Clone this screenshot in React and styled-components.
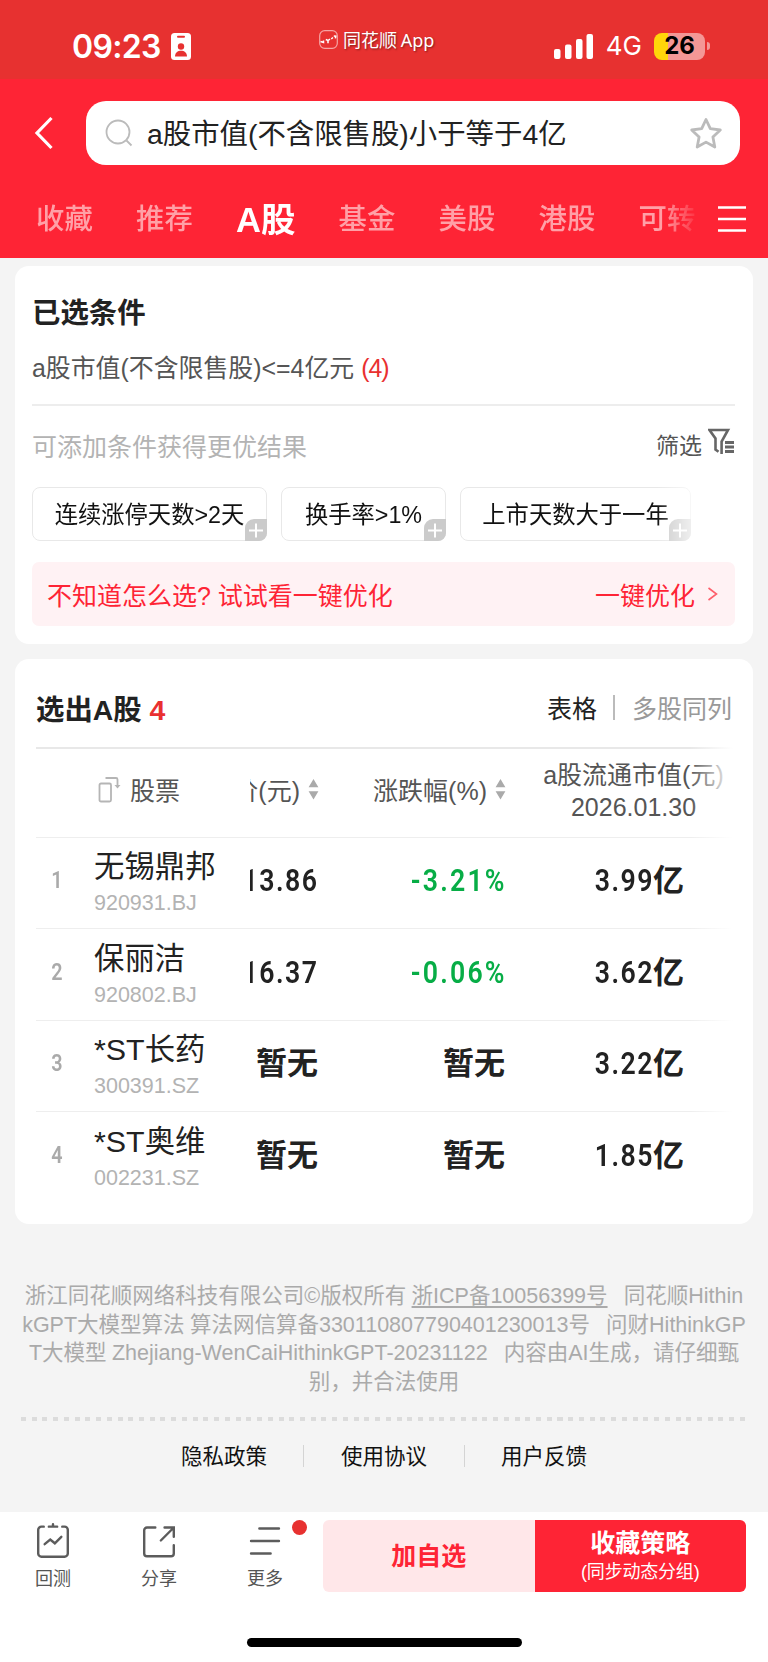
import React from 'react';
import styled, { createGlobalStyle, css } from 'styled-components';

const GlobalStyle = createGlobalStyle`
  * {
    box-sizing: border-box;
  }

  body {
    margin: 0;
    background: #f4f4f4;
    font-family: 'Liberation Sans', 'Noto Sans CJK SC', sans-serif;
    color: #222;
  }
`;

const row = css`
  display: flex;
  align-items: center;
`;

const Page = styled('div')`
  display: flex;
  flex-direction: column;
  width: 768px;
  height: 1662px;
  overflow: hidden;
  background: #f4f4f4;
  white-space: nowrap;
`;

const StatusBar = styled('header')`
  ${row};

  height: 79px;
  padding: 0 58px 0 72px;
  background: #e73130;
  color: #fff;
  font-family: Inter, sans-serif;
`;

const Clock = styled('div')`
  ${row};

  gap: 10px;
  width: 247px;
  padding-top: 14px;
  font-size: 32px;
  line-height: 36px;
  font-weight: 600;
  letter-spacing: -0.7px;
`;

const AppBadge = styled('div')`
  ${row};

  gap: 5px;
  flex: 1;
  font-family: 'Noto Sans', 'Noto Sans CJK SC', sans-serif;
  font-size: 18px;
  line-height: 22px;
  word-spacing: -1px;
  text-shadow: 1px 1px 2px rgba(0, 0, 0, 0.45);
`;

const Signals = styled('div')`
  ${row};

  padding-top: 13px;
  font-size: 26px;
  line-height: 30px;

  svg {
    margin-right: 12px;
  }
`;

const Battery = styled('div')`
  ${row};

  justify-content: center;
  width: 51px;
  height: 27px;
  margin-left: 12px;
  border-radius: 8px;
  background: linear-gradient(90deg, #ffd60a 13.5px, #f49796 13.5px);
  color: #000;
  font-size: 24px;
  font-weight: 700;
`;

const BatteryCap = styled('div')`
  width: 3px;
  height: 8px;
  margin-left: 2px;
  border-radius: 0 3px 3px 0;
  background: #f49796;
`;

const TopArea = styled('div')`
  height: 179px;
  background: #fe2435;
`;

const SearchRow = styled('div')`
  ${row};

  gap: 33px;
  padding: 22px 28px 0 34px;
`;

const SearchBox = styled('div')`
  ${row};

  flex: 1;
  height: 64px;
  padding: 0 17px 0 19px;
  border-radius: 20px;
  background: #fff;
  font-size: 28.4px;

  span {
    flex: 1;
    padding: 0 0 3px 14px;
  }
`;

const TabRow = styled('nav')`
  ${row};

  height: 93px;
  padding: 14px 22px 0 36px;
`;

const Tabs = styled('div')`
  ${row};

  flex: 1;
  gap: 43.2px;
  height: 50px;
  margin-top: -4px;
  overflow: hidden;
  mask-image: linear-gradient(90deg, #000 625px, transparent 665px);
`;

const Tab = styled('div')`
  flex: none;
  color: ${({ $active }) => ($active ? '#fff' : '#ffa0a7')};
  font-size: ${({ $active }) => ($active ? '34.5px' : '28.4px')};
  font-weight: ${({ $active }) => ($active ? 700 : 500)};
`;

const Card = styled('section')`
  width: 738px;
  height: ${({ $height }) => $height}px;
  margin: ${({ $top }) => $top}px 15px 0;
  border-radius: 14px;
  background: #fff;
`;

const CardTitle = styled('h2')`
  margin: 0;
  font-size: 28.4px;
  line-height: 40px;
  font-weight: 700;

  em {
    color: #e93030;
    font-style: normal;
  }
`;

const Conditions = styled(Card)`
  padding: 27px 18px 0 17px;
`;

const Condition = styled('div')`
  height: 55px;
  margin-top: 18px;
  border-bottom: 2px solid #ededed;
  color: #555;
  font-size: 24.9px;
  line-height: 34px;

  em {
    color: #e93030;
    font-style: normal;
    letter-spacing: -1px;
  }
`;

const HintRow = styled('div')`
  ${row};

  justify-content: space-between;
  height: 81px;
  padding-bottom: 3px;
  color: #b3b3b3;
  font-size: 25px;
`;

const Filter = styled('div')`
  ${row};

  gap: 6px;
  margin-top: -3px;
  color: #555;
  font-size: 23px;

  svg {
    margin-top: -5px;
  }
`;

const Chips = styled('div')`
  display: flex;
  gap: 14px;
  overflow: hidden;
  mask-image: linear-gradient(90deg, #000 625px, transparent 675px);
`;

const Chip = styled('div')`
  position: relative;
  flex: none;
  width: ${({ $width }) => $width}px;
  height: 54px;
  border: 1px solid #e8e8e8;
  border-radius: 8px;
  color: #111;
  font-size: 23.3px;
  line-height: 54px;
  text-align: center;
`;

const ChipPlus = styled('svg')`
  position: absolute;
  right: -1px;
  bottom: -1px;
`;

const Banner = styled('div')`
  ${row};

  justify-content: space-between;
  height: 64px;
  margin-top: 21px;
  padding: 0 17px 1px 15px;
  border-radius: 7px;
  background: #fff2f4;
  color: #fe2435;
  font-size: 25px;

  div {
    ${row};

    gap: 12px;
  }
`;

const Results = styled(Card)`
  position: relative;
  padding: 0 18px 0 21px;

  &::after {
    content: '';
    position: absolute;
    top: 80px;
    right: 18px;
    width: 45px;
    height: 470px;
    background: linear-gradient(90deg, rgba(255, 255, 255, 0), #fff 95%);
  }
`;

const ResultsHead = styled('div')`
  ${row};

  justify-content: space-between;
  height: 88px;
  padding-top: 13px;
`;

const Views = styled('div')`
  ${row};

  margin-top: -5px;
  padding-right: 3px;
  color: #999;
  font-size: 25px;

  b {
    color: #222;
    font-weight: 400;
  }

  i {
    width: 2px;
    height: 25px;
    margin: 0 17px 0 16px;
    background: #bbb;
  }
`;

const TableRow = styled('div')`
  display: grid;
  grid-template-columns: 42px 172px 68px 187px 230px;
  align-items: center;
  height: ${({ $head }) => ($head ? '89.5px' : '91.5px')};
  padding-bottom: ${({ $head }) => ($head ? '4px' : '3px')};
  border-top: ${({ $head }) => ($head ? '2px solid #e8e8e8' : '1.5px solid #eee')};
  color: ${({ $head }) => ($head ? '#555' : '#222')};
  font-size: 25px;
`;

const HeadStock = styled('div')`
  ${row};

  gap: 8px;
  margin-top: -3px;
  padding-left: 20px;
`;

const HeadCell = styled('div')`
  ${row};

  justify-content: flex-end;
  gap: 8px;
  overflow: hidden;
  margin: -3px -1px 0 0;
`;

const HeadCap = styled('div')`
  padding-left: 27px;
  text-align: center;
  line-height: 32px;
`;

const Rank = styled('div')`
  color: #aaa;
  font: 600 23px/30px Roboto, sans-serif;
  text-align: center;
  transform: scaleX(0.86);
`;

const Stock = styled('div')`
  padding-left: 16px;
`;

const StockName = styled('div')`
  font-size: 30.4px;
  line-height: 44px;
`;

const StockCode = styled('div')`
  color: #b3b3b3;
  font-size: 21.5px;
  line-height: 30px;
`;

const Value = styled('div')`
  display: flex;
  justify-content: flex-end;
  overflow: hidden;
  color: ${({ $down }) => ($down ? '#07ad46' : '#222')};
  font-family: Roboto, 'Noto Sans CJK SC', sans-serif;
  font-size: 31px;
  line-height: 44px;
  font-weight: 600;
`;

const CapValue = styled(Value)`
  justify-content: center;
  padding-left: 29px;
`;

// narrow figures, anchored to whatever follows on the right
const Figure = styled('span')`
  flex: none;
  letter-spacing: ${({ $wide }) => ($wide ? 2.6 : 1.8)}px;
  margin-right: ${({ $wide }) => ($wide ? -2 : -1)}px;
  transform: scaleX(0.86);
  transform-origin: 100% 50%;
`;

const Legal = styled('div')`
  margin-top: 58px;
  color: #aaa;
  font-size: 21.5px;
  line-height: 28.7px;
  text-align: center;
  white-space: pre;
  word-spacing: -0.6px;

  u {
    text-underline-offset: 3px;
    text-decoration-thickness: 1.5px;
  }
`;

const DottedRule = styled('div')`
  flex: none;
  height: 4px;
  margin: 20px 21px 0;
  background: repeating-linear-gradient(90deg, #dcdcdc 0 5px, transparent 5px 10.73px);
`;

const Links = styled('div')`
  ${row};

  justify-content: center;
  height: 91px;
  padding-bottom: 23px;
  color: #111;
  font-size: 21.5px;

  i {
    width: 1px;
    height: 22px;
    margin: 3px 36.5px 0;
    background: #d4d4d4;
  }
`;

const BottomBar = styled('footer')`
  flex: 1;
  background: #fff;
`;

const Actions = styled('div')`
  display: flex;
  height: 80px;
  padding-top: 8px;
`;

const Tool = styled('div')`
  position: relative;
  display: flex;
  flex-direction: column;
  align-items: center;
  width: 106px;
  color: #555;
  font-size: 18px;
  line-height: 26px;

  svg {
    margin: 2px 0 7px;
  }
`;

const Dot = styled('span')`
  position: absolute;
  top: 0;
  left: 80px;
  width: 15px;
  height: 15px;
  border-radius: 50%;
  background: #e73130;
`;

const Buttons = styled('div')`
  display: flex;
  margin-left: 5px;
`;

const ActionButton = styled('div')`
  display: flex;
  flex-direction: column;
  align-items: center;
  justify-content: center;
  width: 211.5px;
  border-radius: ${({ $primary }) => ($primary ? '0 6px 6px 0' : '6px 0 0 6px')};
  background: ${({ $primary }) => ($primary ? '#fe2435' : '#ffe7e9')};
  color: ${({ $primary }) => ($primary ? '#fff' : '#fe2435')};
  font-size: 25px;
  line-height: 32px;
  font-weight: 700;

  small {
    font-size: 18px;
    line-height: 26px;
    font-weight: 400;
    letter-spacing: -0.2px;
  }
`;

const HomeIndicator = styled('div')`
  width: 275px;
  height: 9px;
  margin: 46px auto 0 247px;
  border-radius: 5px;
  background: #000;
`;

const tabs = ['收藏', '推荐', 'A股', '基金', '美股', '港股', '可转'];

const chips = [
  { text: '连续涨停天数>2天', width: 235 },
  { text: '换手率>1%', width: 165 },
  { text: '上市天数大于一年', width: 231 },
];

const stocks = [
  { name: '无锡鼎邦', code: '920931.BJ', price: '13.86', change: '-3.21%', cap: '3.99' },
  { name: '保丽洁', code: '920802.BJ', price: '16.37', change: '-0.06%', cap: '3.62' },
  { name: '*ST长药', code: '300391.SZ', cap: '3.22' },
  { name: '*ST奥维', code: '002231.SZ', cap: '1.85' },
];

const SortSvg = styled('svg')`
  flex: none;
`;

const SortIcon = () => (
  <SortSvg width="11" height="22" viewBox="0 0 11 22" fill="#aaa">
    <path d="M5.5 1l4.9 8.200H.6zM5.5 21.500l4.900-8.200H.6z" />
  </SortSvg>
);

const BadgeIcon = () => (
  <svg width="20" height="27" viewBox="0 0 20 27">
    <rect width="20" height="27" rx="3.5" fill="#fff" />
    <rect x="6" y="2.8" width="8" height="2" rx="1" fill="#e73130" />
    <circle cx="10" cy="13.5" r="3.2" fill="#e73130" />
    <path d="M4 23.5c0-4 2.7-5.8 6-5.8s6 1.8 6 5.8z" fill="#e73130" />
  </svg>
);

const AppIcon = () => (
  <svg width="19" height="19" viewBox="0 0 19 19" fill="none">
    <rect x=".7" y=".7" width="17.6" height="17.6" rx="5" stroke="#f6a5a4" strokeWidth="1.2" />
    <path d="M1.5 11.5l3 1v-2M6.8 9.5l2.2 1 2-1.4M9 10.5v2.8M12.3 9l1.6-1.5M14.8 6l2 .2-.4 2.2" stroke="#fff" strokeWidth="1.5" />
  </svg>
);

const SignalIcon = () => (
  <svg width="40" height="25" viewBox="0 0 40 25" fill="#fff">
    <rect x="0" y="15" width="6.5" height="10" rx="2" />
    <rect x="11" y="10.5" width="6.5" height="14.5" rx="2" />
    <rect x="22" y="5" width="6.5" height="20" rx="2" />
    <rect x="32.5" y="0" width="6.5" height="25" rx="2" />
  </svg>
);

const FilterIcon = () => (
  <svg width="27" height="27" viewBox="0 0 27 27" fill="none" stroke="#666" strokeWidth="2.6">
    <path d="M13.600 26V13.500L20 2H1.500l6 8.500v11l3 2.200" />
    <path d="M17 14.500h9M17 19h9M17 23.500h9" strokeWidth="2.800" />
  </svg>
);

const App = () => (
  <>
    <GlobalStyle />
    <Page>
      <StatusBar>
        <Clock>
          09:23
          <BadgeIcon />
        </Clock>
        <AppBadge>
          <AppIcon />
          同花顺 App
        </AppBadge>
        <Signals>
          <SignalIcon />
          4G
          <Battery>26</Battery>
          <BatteryCap />
        </Signals>
      </StatusBar>

      <TopArea>
        <SearchRow>
          <svg width="19" height="34" viewBox="0 0 19 34" fill="none" stroke="#fff" strokeWidth="3.2">
            <path d="M17.5 2L3 17l14.5 15" />
          </svg>
          <SearchBox>
            <svg width="28" height="28" viewBox="0 0 28 28" fill="none" stroke="#bbb" strokeWidth="1.8">
              <circle cx="13" cy="13" r="11.5" />
              <path d="M21.5 21.5l5 5" />
            </svg>
            <span>a股市值(不含限售股)小于等于4亿</span>
            <svg width="34" height="32" viewBox="0 0 34 32" fill="none" stroke="#bbb" strokeWidth="2.8" strokeLinejoin="round">
              <path d="M17 2.5l4.300 9.200 10 1.300-7.400 7 1.900 10L17 25.100 8.200 30l1.900-10-7.400-7 10-1.300z" />
            </svg>
          </SearchBox>
        </SearchRow>
        <TabRow>
          <Tabs>
            {tabs.map((tab) => (
              <Tab key={tab} $active={tab === 'A股'}>
                {tab}
              </Tab>
            ))}
          </Tabs>
          <svg width="28" height="28" viewBox="0 0 28 28" stroke="#fff" strokeWidth="2.6">
            <path d="M0 2.5h28M0 14h28M0 25.5h28" />
          </svg>
        </TabRow>
      </TopArea>

      <Conditions $height={378} $top={8}>
        <CardTitle>已选条件</CardTitle>
        <Condition>
          a股市值(不含限售股)&lt;=4亿元 <em>(4)</em>
        </Condition>
        <HintRow>
          可添加条件获得更优结果
          <Filter>
            筛选
            <FilterIcon />
          </Filter>
        </HintRow>
        <Chips>
          {chips.map(({ text, width }) => (
            <Chip key={text} $width={width}>
              {text}
              <ChipPlus width="22" height="22" viewBox="0 0 22 22">
                <path d="M9 0h13v14a8 8 0 0 1-8 8H0V9a9 9 0 0 1 9-9z" fill="#cbcbcb" />
                <path d="M11 4.5v14M4 11.5h14" stroke="#fff" strokeWidth="2" />
              </ChipPlus>
            </Chip>
          ))}
        </Chips>
        <Banner>
          不知道怎么选? 试试看一键优化
          <div>
            一键优化
            <svg width="11" height="14" viewBox="0 0 11 14" fill="none" stroke="#fe5f6b" strokeWidth="1.6">
              <path d="M1.5 1l8 6-8 6" />
            </svg>
          </div>
        </Banner>
      </Conditions>

      <Results $height={565} $top={15}>
        <ResultsHead>
          <CardTitle>
            选出A股 <em>4</em>
          </CardTitle>
          <Views>
            <b>表格</b>
            <i />
            多股同列
          </Views>
        </ResultsHead>
        <TableRow $head>
          <span />
          <HeadStock>
            <svg width="24" height="27" viewBox="0 0 24 27" fill="none" stroke="#b5b5b5" strokeWidth="1.8">
              <rect x="1.5" y="7.5" width="11.5" height="18" rx="1.5" />
              <path d="M7.500 2h10.500q1.500 0 1.500 1.500V10" />
              <path d="M16.500 9h6l-3 3.500z" fill="#b5b5b5" stroke="none" />
            </svg>
            股票
          </HeadStock>
          <HeadCell>
            现价(元)
            <SortIcon />
          </HeadCell>
          <HeadCell>
            涨跌幅(%)
            <SortIcon />
          </HeadCell>
          <HeadCap>
            a股流通市值(元)
            <br />
            2026.01.30
          </HeadCap>
        </TableRow>
        {stocks.map((stock, index) => (
          <TableRow key={stock.code}>
            <Rank>{index + 1}</Rank>
            <Stock>
              <StockName>{stock.name}</StockName>
              <StockCode>{stock.code}</StockCode>
            </Stock>
            <Value>{stock.price ? <Figure>{stock.price}</Figure> : '暂无'}</Value>
            <Value $down={!!stock.change}>{stock.change ? <Figure $wide>{stock.change}</Figure> : '暂无'}</Value>
            <CapValue>
              <Figure>{stock.cap}</Figure>亿
            </CapValue>
          </TableRow>
        ))}
      </Results>

      <Legal>
        浙江同花顺网络科技有限公司©版权所有 <u>浙ICP备10056399号</u>
        {'\u00a0\u00a0 同花顺Hithin\n'}
        {'kGPT大模型算法 算法网信算备330110807790401230013号\u00a0\u00a0 问财HithinkGP\n'}
        {'T大模型 Zhejiang-WenCaiHithinkGPT-20231122\u00a0\u00a0 内容由AI生成，请仔细甄\n'}
        别，并合法使用
      </Legal>
      <DottedRule />
      <Links>
        隐私政策
        <i />
        使用协议
        <i />
        用户反馈
      </Links>

      <BottomBar>
        <Actions>
          <Tool>
            <svg width="36" height="40" viewBox="0 0 36 40" fill="none" stroke="#5c5c5c" strokeWidth="2.6" strokeLinecap="round">
              <path d="M8 5H5.5A3.5 3.5 0 0 0 2 8.500V34a3.500 3.500 0 0 0 3.500 3.500h25A3.500 3.500 0 0 0 34 34V8.500A3.500 3.500 0 0 0 30.500 5H28" />
              <path d="M13.500 5h9M18 2.500v2" />
              <path d="M9 24l6-5 5 4 7-7" />
            </svg>
            回测
          </Tool>
          <Tool>
            <svg width="36" height="40" viewBox="0 0 36 40" fill="none" stroke="#5c5c5c" strokeWidth="2.6" strokeLinecap="round">
              <path d="M14 6H5a3 3 0 0 0-3 3v25a3 3 0 0 0 3 3h26a3 3 0 0 0 3-3v-9" />
              <path d="M20 20L33.500 6.500M24 6h10v10" />
            </svg>
            分享
          </Tool>
          <Tool>
            <svg width="36" height="40" viewBox="0 0 36 40" fill="none" stroke="#5c5c5c" strokeWidth="2.800" strokeLinecap="round">
              <path d="M12 7h21M3 20.500h30M3 34h21" />
            </svg>
            更多
            <Dot />
          </Tool>
          <Buttons>
            <ActionButton>加自选</ActionButton>
            <ActionButton $primary>
              收藏策略
              <small>(同步动态分组)</small>
            </ActionButton>
          </Buttons>
        </Actions>
        <HomeIndicator />
      </BottomBar>
    </Page>
  </>
);

export default App;
